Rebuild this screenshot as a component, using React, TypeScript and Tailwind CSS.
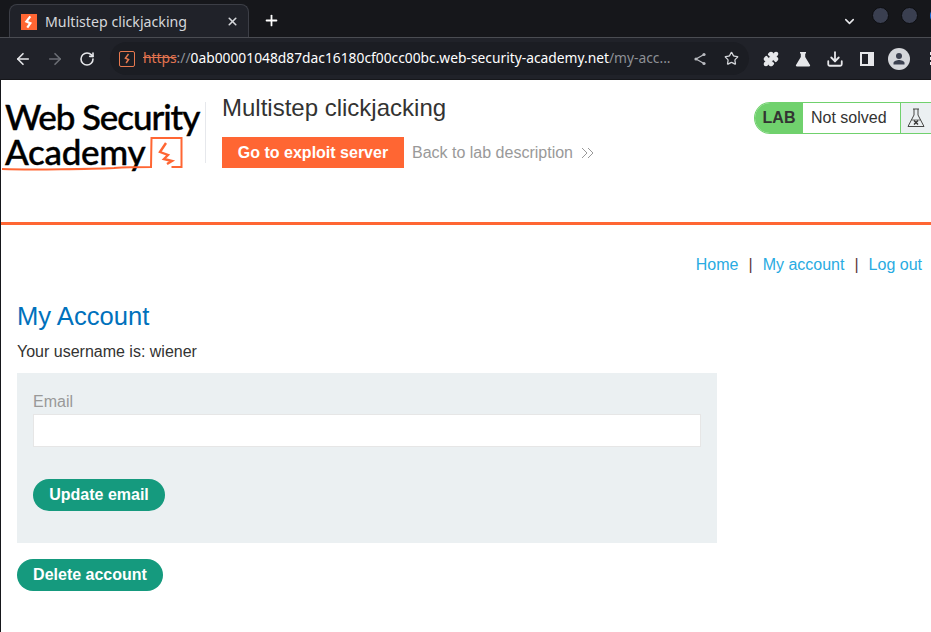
import { ArrowLeft, ArrowRight, Download, Plus, RotateCw, Star, X, ChevronDown, Puzzle } from "lucide-react";

function Bolt({ className, width = 2 }: { className: string; width?: number }) {
  return (
    <svg viewBox="0 0 16 16" className={className} fill="none" stroke="currentColor" strokeWidth={width}>
      <path d="M9.5 1.5 5 7.5l4.5 2L6 14.5" />
    </svg>
  );
}

function BrowserBar() {
  return (
    <div className="h-[80px] bg-[#16171b] font-['Noto_Sans',sans-serif]">
      {/* tabs */}
      <div className="flex h-[38px] items-end overflow-hidden border-b border-[#4a4c52] pl-[9px]">
        <div className="relative -mb-px flex h-[34px] w-[240px] shrink-0 items-center rounded-t-lg border border-b-0 border-[#3c3e46] bg-[#202229] pl-[11px] pr-[9px] text-[14.2px] text-[#d5d7db]">
          <div className="flex h-[16px] w-[16px] items-center justify-center bg-[#ff6633] text-white">
            <Bolt className="h-[14px] w-[14px]" width={2.6} />
          </div>
          <span className="ml-[8px] flex-1 whitespace-nowrap">Multistep clickjacking</span>
          <X size={13} strokeWidth={3} className="text-[#d5d7db]" />
        </div>
        <div className="ml-[14px] flex h-[33px] shrink-0 items-center">
          <Plus size={17} strokeWidth={2.5} className="text-white" />
        </div>
        <div className="flex h-[37px] shrink-0 items-start pt-[7px]">
          <ChevronDown size={15} strokeWidth={2.5} className="ml-[562px] mt-[7px] shrink-0 text-[#e6e7ea]" />
          <div className="ml-[15px] h-[17px] w-[17px] shrink-0 rounded-full border border-[#0c0d10] bg-[#3a3f50]" />
          <div className="ml-[12px] h-[17px] w-[17px] shrink-0 rounded-full border border-[#0c0d10] bg-[#3a3f50]" />
          <div className="ml-[12px] h-[17px] w-[17px] shrink-0 rounded-full bg-[#1a73e8]" />
        </div>
      </div>
      {/* toolbar */}
      <div className="flex h-[41px] items-center overflow-hidden bg-[#202229] pl-[14px]">
        <ArrowLeft size={18} strokeWidth={2.2} className="shrink-0 text-[#e6e7ea]" />
        <ArrowRight size={18} strokeWidth={2.2} className="ml-[14px] shrink-0 text-[#6b6e75]" />
        <RotateCw size={16} strokeWidth={2.4} className="ml-[15px] shrink-0 text-[#e6e7ea]" />
        <div className="ml-[15px] flex h-[33px] w-[639px] shrink-0 items-center rounded-full bg-[#1b1d23] pl-[9px] text-[13.8px]">
          <div className="flex h-[16px] w-[16px] items-center justify-center rounded-[2px] border-[1.5px] border-[#e8794f] text-[#e8794f]">
            <Bolt className="h-[11px] w-[11px]" width={2.2} />
          </div>
          <span className="ml-[8px] whitespace-nowrap">
            <span className="text-[#e2734f] line-through">https</span>
            <span className="text-[#8d9096]">://</span>
            <span className="text-white">0ab00001048d87dac16180cf00cc00bc.web-security-academy.net</span>
            <span className="text-[#8d9096]">/my-acc...</span>
          </span>
          <svg viewBox="0 0 14 14" className="ml-auto h-[14px] w-[14px] text-[#b9bbc0]" fill="currentColor" stroke="currentColor">
            <path d="M11 2.5 3 7l8 4.5" fill="none" strokeWidth="1.3" />
            <circle cx="11" cy="2.5" r="1.6" strokeWidth="0" />
            <circle cx="3" cy="7" r="1.6" strokeWidth="0" />
            <circle cx="11" cy="11.5" r="1.6" strokeWidth="0" />
          </svg>
          <Star size={15} strokeWidth={2} className="ml-[17px] mr-[10px] text-[#d5d7db]" />
        </div>
        <Puzzle size={16} fill="currentColor" className="ml-[14px] shrink-0 text-[#e6e7ea]" />
        <svg viewBox="0 0 16 16" className="ml-[16px] h-[16px] w-[16px] shrink-0 text-[#e6e7ea]" fill="currentColor">
          <path d="M5 1h6v1.5h-.8v3.4L15 14a1 1 0 0 1-.9 1.5H1.9A1 1 0 0 1 1 14l4.800-8.100V2.500H5z" />
        </svg>
        <Download size={18} strokeWidth={2.4} className="ml-[15px] shrink-0 text-[#e6e7ea]" />
        <div className="ml-[16px] flex h-[14px] w-[14px] shrink-0 justify-end border-[2px] border-[#e6e7ea]">
          <div className="h-full w-[4px] bg-[#e6e7ea]" />
        </div>
        <div className="ml-[14px] flex h-[22px] w-[22px] shrink-0 items-center justify-center rounded-full bg-[#d5d7db]">
          <svg viewBox="0 0 16 16" className="h-[16px] w-[16px] text-[#3c4150]" fill="currentColor">
            <circle cx="8" cy="5" r="3" />
            <path d="M2.500 13.500V12c0-2 3.500-3 5.500-3s5.500 1 5.500 3v1.500z" />
          </svg>
        </div>
        <div className="ml-[20px] flex shrink-0 flex-col gap-[2px]">
          <div className="h-[3px] w-[3px] bg-[#e6e7ea]" />
          <div className="h-[3px] w-[3px] bg-[#e6e7ea]" />
          <div className="h-[3px] w-[3px] bg-[#e6e7ea]" />
        </div>
      </div>
    </div>
  );
}

function Logo() {
  return (
    <div className="relative mt-[5px] h-[75px] w-[206px] shrink-0 pl-[4px] font-['Lato',sans-serif] text-[35px] font-medium leading-[35px] tracking-[-1px] text-black [-webkit-text-stroke:0.4px_black]">
      <div className="whitespace-nowrap tracking-[-1.1px]">Web Security</div>
      <div className="tracking-[-0.3px]">Academy</div>
      <svg viewBox="1 99 182 75" className="absolute left-0 top-0 h-[75px] w-[182px] text-[#ff6633]" fill="none" stroke="currentColor" strokeWidth="2">
        <path d="M2 169c30 1 90 0 112-1 14-1 26-1 37-1l.5-29h30v29h-10" />
        <path d="M166 143l-6 9 8 3-4 4 8 2-5 3" strokeWidth="2.4" />
      </svg>
      <div className="absolute left-[204px] top-[3px] h-[61px] w-px bg-[#e6e8ec]" />
    </div>
  );
}

function LabHeader() {
  return (
    <div className="flex h-[145px] border-b-[3px] border-[#ff6633] pt-[14px]">
      <Logo />
      <div className="ml-[15px]">
        <h2 className="text-[24px] leading-[28px] text-[#333332]">Multistep clickjacking</h2>
        <div className="mt-[15px] flex items-center">
          <a className="flex h-[31px] w-[182px] items-center justify-center bg-[#ff6633] text-[16px] font-bold text-white">
            Go to exploit server
          </a>
          <a className="ml-[8px] text-[16px] text-[#999999]">Back to lab description</a>
          <svg viewBox="0 0 14 12" className="ml-[8px] h-[12px] w-[14px] text-[#999999]" fill="none" stroke="currentColor" strokeWidth="1">
            <path d="M1 1l5 5-5 5M7 1l5 5-5 5" />
          </svg>
        </div>
      </div>
      <div className="-mr-[1px] ml-auto mt-[8px] flex h-[32px] w-[178px] overflow-hidden rounded-l-full rounded-r-[16px] border border-[#70d16d] text-[16px] text-[#333332]">
        <div className="flex w-[48px] items-center justify-center bg-[#70d16d] font-bold">LAB</div>
        <div className="flex w-[98px] items-center border-r border-[#70d16d] bg-white pl-[8px]">Not solved</div>
        <div className="flex flex-1 items-center bg-[#ebf0f2] pl-[6px]">
          <svg viewBox="0 0 18 20" className="h-[20px] w-[18px] text-[#333332]" fill="none" stroke="currentColor" strokeWidth="0.9">
            <path d="M6 1h6M7 1v6L1 18.500h16L11 7V1" />
            <path d="M4.500 12h9" strokeWidth="0.7" />
            <path d="M7 12.500l4 4M11 12.500l-4 4" strokeWidth="1.4" />
          </svg>
        </div>
      </div>
    </div>
  );
}

export default function App() {
  return (
    <div className="h-[632px] w-[931px] overflow-hidden bg-white font-['Liberation_Sans',sans-serif]">
      <BrowserBar />
      <div className="h-[552px] border-l border-[#16171b]">
        <LabHeader />
        <div className="pl-[16px] pr-[9px]">
          <div className="mt-[31px] flex justify-end text-[16px] leading-[18px] text-[#29abe2]">
            <a>Home</a>
            <span className="mx-[10px] text-[#5c3a3a]">|</span>
            <a>My account</a>
            <span className="mx-[10px] text-[#5c3a3a]">|</span>
            <a>Log out</a>
          </div>
          <h1 className="mt-[27px] text-[25.6px] leading-[30px] text-[#0071bc]">My Account</h1>
          <p className="mt-[12px] text-[16px] leading-[18px] text-[#333332]">Your username is: wiener</p>
          <form className="mt-[12px] h-[170px] w-[700px] bg-[#ebf0f2] px-[16px] pt-[20px]">
            <label className="block text-[16px] leading-[18px] text-[#999999]">Email</label>
            <input className="mt-[3px] block h-[33px] w-[668px] border border-[#e6e6e6] bg-white" />
            <button type="button" className="mt-[32px] h-[32px] w-[132px] rounded-full bg-[#159a7e] text-[16px] font-bold text-white">
              Update email
            </button>
          </form>
          <button type="button" className="mt-[16px] h-[32px] w-[146px] rounded-full bg-[#159a7e] text-[16px] font-bold text-white">
            Delete account
          </button>
        </div>
      </div>
    </div>
  );
}
